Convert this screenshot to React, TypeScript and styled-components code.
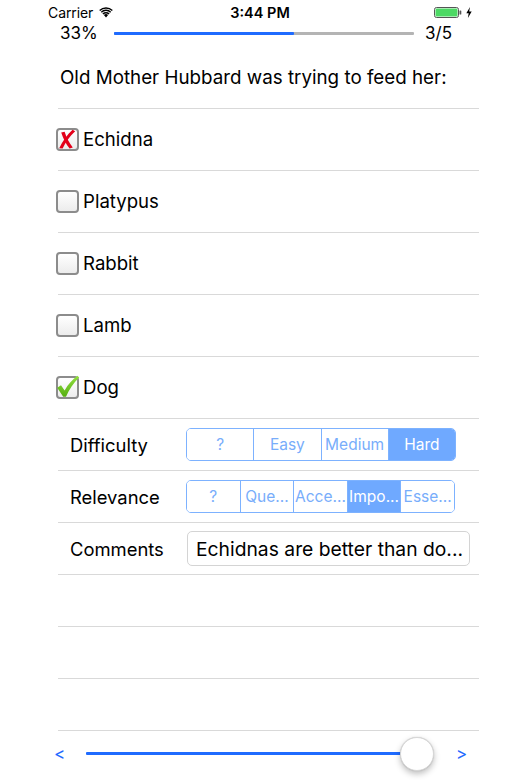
import React from 'react';
import styled, { createGlobalStyle } from 'styled-components';

const Global = createGlobalStyle`
  html, body { margin: 0; padding: 0; background: #fff; }
  body {
    font-family: Inter, "Liberation Sans", Arial, sans-serif;
    color: #000;
    -webkit-font-smoothing: antialiased;
  }
`;

const Screen = styled.div`
  width: 520px;
  height: 780px;
  display: flex;
  flex-direction: column;
  overflow: hidden;
  background: #fff;
`;

const StatusBar = styled.div`
  height: 24px;
  padding: 0 48px;
  display: grid;
  grid-template-columns: 1fr auto 1fr;
  align-items: center;
  font-size: 14px;
`;

const StatusLeft = styled.div`
  display: flex;
  align-items: center;
  gap: 6px;
  letter-spacing: -0.1px;
`;

const StatusTime = styled.div`
  font-weight: 600;
  font-size: 14.5px;
`;

const StatusRight = styled.div`
  display: flex;
  justify-content: flex-end;
  align-items: center;
  gap: 4px;
`;

const ProgressRow = styled.div`
  height: 18px;
  padding: 0 68px 0 60px;
  display: flex;
  align-items: center;
  font-size: 17px;
`;

const ProgressTrack = styled.div`
  flex: 1;
  height: 3px;
  margin: 0 11px 0 16px;
  background: #b4b4b4;
  border-radius: 1px;
  display: flex;
`;

const ProgressFill = styled.div`
  height: 100%;
  background: #1f6bff;
  border-radius: 1px;
`;

const Question = styled.div`
  padding: 25px 0 19px 60px;
  line-height: 22px;
  font-size: 18.8px;
`;

const List = styled.div`
  margin: 0 41px 0 58px;
  border-top: 1px solid #d9d9d9;
`;

const OptionRow = styled.div`
  height: 61px;
  border-bottom: 1px solid #d9d9d9;
  display: flex;
  align-items: center;
  gap: 4px;
  font-size: 18.6px;
  line-height: 22px;
`;

const OptionLabel = styled.span`
  padding-bottom: 2px;
`;

const CheckBox = styled.div`
  width: 19px;
  height: 19px;
  margin-left: -2px;
  border: 2px solid #8c8c8c;
  border-radius: 4px;
  background: linear-gradient(#ffffff, #ececec);
  display: flex;
  align-items: center;
  justify-content: center;
  overflow: visible;
`;

const FieldRow = styled.div`
  height: 51px;
  border-bottom: 1px solid #d9d9d9;
  display: flex;
  align-items: center;
  padding-left: 12px;
`;

const FieldLabel = styled.div`
  width: 116px;
  font-size: 18.4px;
`;

const Segmented = styled.div<{ $width: number }>`
  width: ${(p) => p.$width}px;
  height: 31px;
  border: 1px solid #7db2ff;
  border-radius: 5px;
  display: flex;
  overflow: hidden;
  box-sizing: content-box;
`;

const Segment = styled.div<{ $selected: boolean }>`
  flex: 1;
  display: flex;
  align-items: center;
  justify-content: center;
  font-size: 15.5px;
  color: ${(p) => (p.$selected ? '#fff' : '#78adfb')};
  background: ${(p) => (p.$selected ? '#6fa9ff' : '#fff')};
  white-space: nowrap;
  overflow: hidden;
  & + & {
    border-left: 1px solid #7db2ff;
  }
`;

const TextField = styled.div`
  width: 273px;
  height: 33px;
  margin-left: 1px;
  padding: 0 0 0 8px;
  border: 1px solid #d4d4d4;
  border-radius: 5px;
  display: flex;
  align-items: center;
  font-size: 19.3px;
  white-space: nowrap;
  overflow: hidden;
`;

const EmptyRow = styled.div`
  height: 51px;
  border-bottom: 1px solid #d9d9d9;
`;

const SliderRow = styled.div`
  flex: 1;
  padding: 0 54px 4px 55px;
  display: flex;
  align-items: center;
`;

const Arrow = styled.div`
  color: #1f6bff;
  font-size: 17px;
  width: 9px;
  display: flex;
  justify-content: center;
`;

const SliderArea = styled.div`
  flex: 1;
  margin: 0 23px 0 22px;
  display: flex;
  align-items: center;
`;

const SliderFill = styled.div`
  flex: 1;
  height: 3px;
  background: #1f6bff;
  border-radius: 1px;
`;

const Thumb = styled.div`
  width: 32px;
  height: 32px;
  margin-left: -1px;
  border-radius: 50%;
  background: #fff;
  border: 0.5px solid #d7d7d7;
  box-shadow: 0 3px 6px rgba(0, 0, 0, 0.25), 0 0 1px rgba(0, 0, 0, 0.2);
`;

const WifiIcon = () => (
  <svg width="14" height="11" viewBox="0 0 14 11">
    <path d="M7 10.5 L4.9 8.1 A3 3 0 0 1 9.1 8.1 Z" fill="#000" />
    <path d="M3.4 6.5 A5.2 5.2 0 0 1 10.6 6.5 L9.6 7.6 A3.8 3.8 0 0 0 4.4 7.6 Z" fill="#000" />
    <path d="M1.8 4.7 A7.5 7.5 0 0 1 12.2 4.7 L11.2 5.8 A6 6 0 0 0 2.8 5.8 Z" fill="#000" />
    <path d="M0.2 2.9 A9.9 9.9 0 0 1 13.8 2.9 L12.8 4 A8.4 8.4 0 0 0 1.2 4 Z" fill="#000" />
  </svg>
);

const Battery = () => (
  <svg width="28" height="11" viewBox="0 0 28 11">
    <rect x="0.5" y="0.5" width="24" height="10" rx="2" fill="#fff" stroke="#555" strokeWidth="1" />
    <rect x="1.5" y="1.5" width="22" height="8" rx="1.2" fill="#4cd964" />
    <rect x="25.5" y="3.5" width="1.8" height="4" rx="0.6" fill="#555" />
  </svg>
);

const Bolt = () => (
  <svg width="6" height="11" viewBox="0 0 6 11">
    <path d="M4 0 L0.3 6.2 L2.7 6.2 L1.9 11 L5.7 4.6 L3.2 4.6 Z" fill="#000" />
  </svg>
);

const RedCross = () => (
  <svg width="19" height="19" viewBox="0 0 19 19" style={{ overflow: 'visible' }}>
    <path d="M1.2 18.2 L4.6 18.6 C7.5 12.5 11.5 6 17.2 1.2 L14.6 -0.2 C9.5 4.5 4.5 11 1.2 18.2 Z" fill="#e3001a" />
    <path d="M3.2 2.6 L6.6 1.8 C8.5 7.5 11 12.8 14.8 17.4 L11.6 18.6 C8 14 5 8.5 3.2 2.6 Z" fill="#e3001a" />
  </svg>
);

const GreenCheck = () => (
  <svg width="19" height="19" viewBox="0 0 19 19" style={{ overflow: 'visible' }}>
    <defs>
      <linearGradient id="chk" x1="0" y1="0" x2="0" y2="1">
        <stop offset="0" stopColor="#93e040" />
        <stop offset="1" stopColor="#55ae10" />
      </linearGradient>
    </defs>
    <path d="M-0.8 9.8 L3 7.2 L6.6 12.4 C10 6.5 14.5 1.5 19.5 -2.2 L21.2 -0.4 C15.5 5 11 11.5 8 18.8 L5.2 18.8 Z" fill="url(#chk)" />
  </svg>
);

type Option = { label: string; mark?: 'cross' | 'check' };

const options: Option[] = [
  { label: 'Echidna', mark: 'cross' },
  { label: 'Platypus' },
  { label: 'Rabbit' },
  { label: 'Lamb' },
  { label: 'Dog', mark: 'check' },
];

const difficulty = ['?', 'Easy', 'Medium', 'Hard'];
const relevance = ['?', 'Que...', 'Acce...', 'Impo...', 'Esse...'];

export default function App() {
  const progress = 0.6;
  return (
    <Screen>
      <Global />
      <StatusBar>
        <StatusLeft>
          <span>Carrier</span>
          <WifiIcon />
        </StatusLeft>
        <StatusTime>3:44 PM</StatusTime>
        <StatusRight>
          <Battery />
          <Bolt />
        </StatusRight>
      </StatusBar>
      <ProgressRow>
        <span>33%</span>
        <ProgressTrack>
          <ProgressFill style={{ width: `${progress * 100}%` }} />
        </ProgressTrack>
        <span>3/5</span>
      </ProgressRow>
      <Question>Old Mother Hubbard was trying to feed her:</Question>
      <List>
        {options.map((o) => (
          <OptionRow key={o.label}>
            <CheckBox>
              {o.mark === 'cross' && <RedCross />}
              {o.mark === 'check' && <GreenCheck />}
            </CheckBox>
            <OptionLabel>{o.label}</OptionLabel>
          </OptionRow>
        ))}
        <FieldRow>
          <FieldLabel>Difficulty</FieldLabel>
          <Segmented $width={268}>
            {difficulty.map((d) => (
              <Segment key={d} $selected={d === 'Hard'}>
                {d}
              </Segment>
            ))}
          </Segmented>
        </FieldRow>
        <FieldRow>
          <FieldLabel>Relevance</FieldLabel>
          <Segmented $width={267}>
            {relevance.map((d) => (
              <Segment key={d} $selected={d === 'Impo...'}>
                {d}
              </Segment>
            ))}
          </Segmented>
        </FieldRow>
        <FieldRow>
          <FieldLabel>Comments</FieldLabel>
          <TextField>Echidnas are better than do...</TextField>
        </FieldRow>
        <EmptyRow />
        <EmptyRow />
        <EmptyRow />
      </List>
      <SliderRow>
        <Arrow>&lt;</Arrow>
        <SliderArea>
          <SliderFill />
          <Thumb />
        </SliderArea>
        <Arrow>&gt;</Arrow>
      </SliderRow>
    </Screen>
  );
}
